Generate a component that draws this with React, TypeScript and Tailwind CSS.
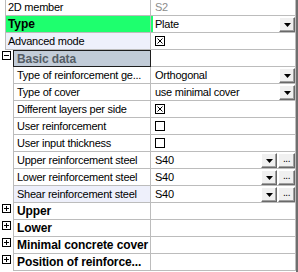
import React from "react";

type Row = {
    label: string;
    value?: string;
    kind?: "text" | "combo" | "steel" | "check" | "uncheck" | "muted";
    bg?: string;
};

const topRows: Row[] = [
    { label: "2D member", value: "S2", kind: "muted" },
    { label: "Type", value: "Plate", kind: "combo", bg: "green" },
    { label: "Advanced mode", kind: "check", bg: "lav" },
];

const basicRows: Row[] = [
    { label: "Type of reinforcement ge...", value: "Orthogonal", kind: "combo" },
    { label: "Type of cover", value: "use minimal cover", kind: "combo" },
    { label: "Different layers per side", kind: "check" },
    { label: "User reinforcement", kind: "uncheck" },
    { label: "User input thickness", kind: "uncheck" },
    { label: "Upper reinforcement steel", value: "S40", kind: "steel" },
    { label: "Lower reinforcement steel", value: "S40", kind: "steel" },
    { label: "Shear reinforcement steel", value: "S40", kind: "steel", bg: "lav" },
];

const groups = ["Upper", "Lower", "Minimal concrete cover", "Position of reinforce..."];

function Arrow() {
    return (
        <svg width="7" height="4" viewBox="0 0 7 4">
            <path d="M0 0h7L3.5 4z" fill="#000" />
        </svg>
    );
}

function Bevel({ children, w }: { children: React.ReactNode; w: string }) {
    return (
        <div
            className={`${w} h-[15px] mt-px flex items-center justify-center bg-[#f0f0f0] border border-t-white border-l-white border-r-[#696969] border-b-[#696969] shadow-[inset_-1px_-1px_0_#a0a0a0]`}
        >
            {children}
        </div>
    );
}

function Box({ checked }: { checked: boolean }) {
    return (
        <svg width="10" height="10" viewBox="0 0 10 10">
            <rect x="0.5" y="0.5" width="9" height="9" fill="#fff" stroke="#000" />
            {checked && <path d="M2.5 2.5l5 5M7.5 2.5l-5 5" stroke="#000" strokeWidth="1" />}
        </svg>
    );
}

function Expander({ open }: { open: boolean }) {
    return (
        <svg width="9" height="9" viewBox="0 0 9 9">
            <rect x="0.5" y="0.5" width="8" height="8" fill="#fff" stroke="#000" />
            <path d="M2 4.5h5" stroke="#000" />
            {!open && <path d="M4.5 2v5" stroke="#000" />}
        </svg>
    );
}

function Value({ row }: { row: Row }) {
    const green = row.bg === "green";
    return (
        <div className="w-[145px] h-full flex items-center border-r border-[#bcbcbc] bg-white">
            {green && <div className="w-[2px] h-full bg-[#1eff6e]" />}
            <div className={`flex-1 flex items-center h-full ${green ? "pl-[2px]" : "pl-[4px]"}`}>
                {row.kind === "check" && <Box checked />}
                {row.kind === "uncheck" && <Box checked={false} />}
                {(row.kind === "text" || row.kind === "combo" || row.kind === "steel") && (
                    <span className="text-black">{row.value}</span>
                )}
                {row.kind === "muted" && <span className="text-[#8c8c8c]">{row.value}</span>}
            </div>
            {row.kind === "combo" && (
                <div className="self-start">
                    <Bevel w="w-[16px]">
                        <Arrow />
                    </Bevel>
                </div>
            )}
            {row.kind === "steel" && (
                <div className="self-start flex gap-px">
                    <Bevel w="w-[16px]">
                        <Arrow />
                    </Bevel>
                    <Bevel w="w-[17px]">
                        <span className="text-[10px] leading-none -mt-[3px] tracking-[-0.5px]">...</span>
                    </Bevel>
                </div>
            )}
        </div>
    );
}

function labelBg(bg?: string) {
    if (bg === "green") return "bg-[#1eff6e]";
    if (bg === "lav") return "bg-[#eef0fb]";
    return "bg-white";
}

export default function App() {
    return (
        <div
            className="w-[298px] h-[272px] overflow-hidden flex bg-white text-[11px] tracking-[-0.25px] text-black"
            style={{ fontFamily: '"Liberation Sans", Arial, sans-serif' }}
        >
            <div className="w-[296px] flex flex-col">
                {topRows.map((row, i) => (
                    <div key={row.label} className={`flex ${i === 0 ? "h-[16px]" : "h-[17px]"}`}>
                        <div className="w-[5px]" />
                        <div
                            className={`w-[146px] flex items-center pl-[2px] border-l border-r border-b border-[#bcbcbc] ${labelBg(row.bg)} ${
                                row.bg === "green" ? "font-bold text-[12px] tracking-[-0.1px]" : ""
                            }`}
                        >
                            {row.label}
                        </div>
                        <div className="border-b border-[#bcbcbc]">
                            <Value row={row} />
                        </div>
                    </div>
                ))}

                {/* Basic data category */}
                <div className="flex h-[17px]">
                    <div className="w-[13px] flex justify-start pl-[2px] pt-[1px]">
                        <Expander open />
                    </div>
                    <div className="w-[138px] flex items-center pl-[3px] border border-[#1e1e1e] bg-[#c2ccd8] font-bold text-[12px] tracking-[-0.1px] text-[#555d66]">
                        Basic data
                    </div>
                    <div className="border-b border-[#bcbcbc]">
                        <div className="w-[145px] h-full border-r border-[#bcbcbc] bg-white" />
                    </div>
                </div>

                {basicRows.map((row) => (
                    <div key={row.label} className="flex h-[17px]">
                        <div className="w-[13px]" />
                        <div
                            className={`w-[138px] flex items-center pl-[3px] border-l border-r border-b border-[#bcbcbc] whitespace-nowrap overflow-hidden ${labelBg(
                                row.bg
                            )}`}
                        >
                            {row.label}
                        </div>
                        <div className="border-b border-[#bcbcbc]">
                            <Value row={row} />
                        </div>
                    </div>
                ))}

                {groups.map((g) => (
                    <div key={g} className="flex h-[17px]">
                        <div className="w-[13px] flex justify-start pl-[2px] pt-[1px]">
                            <Expander open={false} />
                        </div>
                        <div className="w-[138px] flex items-center pl-[3px] border-l border-r border-b border-[#bcbcbc] font-bold text-[12px] tracking-[-0.1px] whitespace-nowrap overflow-hidden bg-white">
                            {g}
                        </div>
                        <div className="border-b border-[#bcbcbc]">
                            <div className="w-[145px] h-full border-r border-[#bcbcbc] bg-white" />
                        </div>
                    </div>
                ))}
            </div>
            <div className="w-[2px] bg-[#6f6f6f]" />
        </div>
    );
}
